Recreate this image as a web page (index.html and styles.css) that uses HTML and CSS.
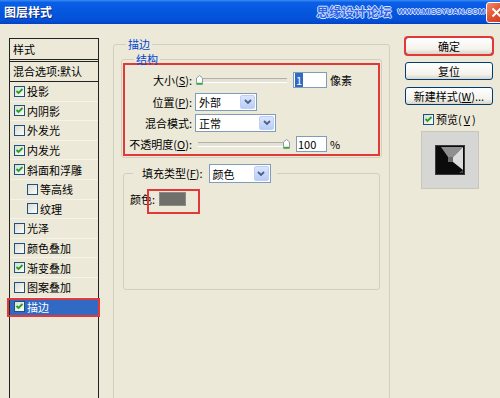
FILE: index.html
```html
<!DOCTYPE html>
<html lang="zh-CN">
<head>
<meta charset="utf-8">
<title>图层样式</title>
<link rel="stylesheet" href="styles.css">
</head>
<body>
<div class="titlebar">
  <span class="title">图层样式</span>
  <span class="wm"><span class="wm-cn">思缘设计论坛</span><span class="wm-en">WWW.MISSYUAN.COM</span></span>
  <span class="close"><svg width="11" height="11" viewBox="0 0 11 11"><path d="M1.5 1.5 L9.5 9.5 M9.5 1.5 L1.5 9.5" stroke="#fff" stroke-width="2"/></svg></span>
</div>
<div class="main">
  <div class="list">
    <div class="list-head">样式</div>
    <div class="list-blend">混合选项:默认</div>
    <div class="item"><span class="cb"><svg viewBox="0 0 9 9" width="9" height="9"><path d="M1.5 4 L3.5 6 L7.5 2" fill="none" stroke="#21a121" stroke-width="1.8"/></svg></span>投影</div>
    <div class="item"><span class="cb"><svg viewBox="0 0 9 9" width="9" height="9"><path d="M1.5 4 L3.5 6 L7.5 2" fill="none" stroke="#21a121" stroke-width="1.8"/></svg></span>内阴影</div>
    <div class="item"><span class="cb"></span>外发光</div>
    <div class="item"><span class="cb"><svg viewBox="0 0 9 9" width="9" height="9"><path d="M1.5 4 L3.5 6 L7.5 2" fill="none" stroke="#21a121" stroke-width="1.8"/></svg></span>内发光</div>
    <div class="item"><span class="cb"><svg viewBox="0 0 9 9" width="9" height="9"><path d="M1.5 4 L3.5 6 L7.5 2" fill="none" stroke="#21a121" stroke-width="1.8"/></svg></span>斜面和浮雕</div>
    <div class="item sub"><span class="cb"></span>等高线</div>
    <div class="item sub"><span class="cb"></span>纹理</div>
    <div class="item"><span class="cb"></span>光泽</div>
    <div class="item"><span class="cb"></span>颜色叠加</div>
    <div class="item"><span class="cb"><svg viewBox="0 0 9 9" width="9" height="9"><path d="M1.5 4 L3.5 6 L7.5 2" fill="none" stroke="#21a121" stroke-width="1.8"/></svg></span>渐变叠加</div>
    <div class="item"><span class="cb"></span>图案叠加</div>
    <div class="item sel"><span class="cb"><svg viewBox="0 0 9 9" width="9" height="9"><path d="M1.5 4 L3.5 6 L7.5 2" fill="none" stroke="#21a121" stroke-width="1.8"/></svg></span>描边</div>
  </div>

  <fieldset class="group outer">
    <legend class="lg-outer">描边</legend>
    <fieldset class="group struct">
      <legend class="lg-struct">结构</legend>
      <div class="mark">
        <div class="row r1">
          <span class="lbl">大小(<u>S</u>):</span>
          <span class="slider s-size"><span class="thumb"><svg width="7" height="10" viewBox="0 0 7 10"><path d="M0.5 3 L3.5 0.5 L6.5 3 V9.5 H0.5 Z" fill="#fff" stroke="#8c9ca8"/><path d="M1 8.5 H6" stroke="#2bb52b" stroke-width="1.5"/></svg></span></span>
          <span class="input w34"><span class="hl">1</span></span>
          <span class="unit">像素</span>
        </div>
        <div class="row r2">
          <span class="lbl">位置(<u>P</u>):</span>
          <span class="select w62">外部<span class="arrow"><svg width="8" height="6" viewBox="0 0 8 6"><path d="M1 1 L4 4 L7 1" fill="none" stroke="#4d6185" stroke-width="1.8"/></svg></span></span>
        </div>
        <div class="row r3">
          <span class="lbl">混合模式:</span>
          <span class="select w81">正常<span class="arrow"><svg width="8" height="6" viewBox="0 0 8 6"><path d="M1 1 L4 4 L7 1" fill="none" stroke="#4d6185" stroke-width="1.8"/></svg></span></span>
        </div>
        <div class="row r4">
          <span class="lbl">不透明度(<u>O</u>):</span>
          <span class="slider s-op"><span class="thumb right"><svg width="7" height="10" viewBox="0 0 7 10"><path d="M0.5 3 L3.5 0.5 L6.5 3 V9.5 H0.5 Z" fill="#fff" stroke="#8c9ca8"/><path d="M1 8.5 H6" stroke="#2bb52b" stroke-width="1.5"/></svg></span></span>
          <span class="input w31">100</span>
          <span class="unit">%</span>
        </div>
      </div>
    </fieldset>
    <fieldset class="group fill">
      <legend class="lg-fill"><span>填充类型(<u>F</u>):</span><span class="select w62 tall">颜色<span class="arrow"><svg width="8" height="6" viewBox="0 0 8 6"><path d="M1 1 L4 4 L7 1" fill="none" stroke="#4d6185" stroke-width="1.8"/></svg></span></span></legend>
      <div class="color-row">颜色:<span class="swatch"></span><span class="mark2"></span></div>
    </fieldset>
  </fieldset>

  <div class="side">
    <div class="btn ok">确定</div>
    <div class="btn">复位</div>
    <div class="btn">新建样式(<u>W</u>)...</div>
    <div class="preview-row"><span class="cb"><svg viewBox="0 0 9 9" width="9" height="9"><path d="M1.5 4 L3.5 6 L7.5 2" fill="none" stroke="#21a121" stroke-width="1.8"/></svg></span>预览(<u>V</u>)</div>
    <div class="preview">
      <svg width="30" height="30" viewBox="0 0 30 30">
        <rect width="30" height="30" fill="#3a3a3a"/>
        <rect x="1" y="1" width="28" height="28" fill="#0b0b0b"/>
        <polygon points="6,2 28,2 18,12 13,12" fill="#8f8f8f"/>
        <polygon points="28,2 28,25 18,17 18,12" fill="#dcdcdc"/>
        <rect x="13" y="12" width="5" height="5" fill="#6b6b6b"/>
        <polygon points="28,25 28,28 24,28" fill="#4a4a4a"/>
      </svg>
    </div>
  </div>
</div>
</body>
</html>
```

FILE: styles.css
```css
* { box-sizing: border-box; }
html, body { margin: 0; padding: 0; }
body {
  width: 500px;
  height: 398px;
  overflow: hidden;
  background: #ece9d8;
  font-family: "Noto Sans CJK SC", "Liberation Sans", sans-serif;
  font-size: 11px;
  color: #000;
}
u { text-decoration: underline; text-underline-offset: 1px; }

/* title bar */
.titlebar {
  height: 24px;
  display: flex;
  align-items: center;
  background: linear-gradient(#3b8cf5 0%, #0b5fe6 10%, #0556de 50%, #0451d6 85%, #0341c4 100%);
  overflow: hidden;
}
.title {
  margin-left: 4px;
  color: #fff;
  font-weight: bold;
  font-size: 12px;
  line-height: 14px;
  text-shadow: 1px 1px #0a2c85;
}
.wm {
  margin-left: auto;
  display: flex;
  align-items: center;
  gap: 6px;
}
.wm-cn {
  font-size: 12.5px;
  font-weight: bold;
  line-height: 14px;
  color: #2d63ea;
  text-shadow: -1px 0 #d8e6ff, 1px 0 #d8e6ff, 0 -1px #d8e6ff, 0 1px #d8e6ff;
}
.wm-en {
  font-family: "Liberation Sans", sans-serif;
  font-size: 8px;
  font-weight: bold;
  line-height: 10px;
  color: #2d63ea;
  text-shadow: -1px 0 #d8e6ff, 1px 0 #d8e6ff, 0 -1px #d8e6ff, 0 1px #d8e6ff;
}
.close {
  width: 21px;
  height: 21px;
  margin-left: 1px;
  margin-right: -7px;
  flex-shrink: 0;
  border: 1px solid #fff;
  border-radius: 3px;
  background: linear-gradient(135deg, #f08a6a, #e0502c 50%, #c93a18);
  display: flex;
  align-items: center;
  justify-content: center;
}

/* main */
.main {
  display: flex;
  align-items: flex-start;
  padding-top: 13px;
  height: 374px;
}

/* left list */
.list {
  margin: 1px 0 0 9px;
  width: 90px;
  height: 400px;
  flex-shrink: 0;
  border: 1px solid #222;
  line-height: 14px;
}
.list-head {
  height: 23px;
  padding: 3px 0 0 3px;
  border-bottom: 3px double #222;
}
.list-blend {
  height: 20px;
  padding: 2px 0 0 3px;
  border-bottom: 1px solid #222;
}
.item {
  height: 19.6px;
  display: flex;
  align-items: center;
  gap: 2px;
  padding-left: 4px;
  border-bottom: 1px solid #f5f3ea;
}
.item.sub { padding-left: 17px; }
.item.sel {
  position: relative;
  background: #316ac5;
  color: #fff;
  border-bottom-color: #316ac5;
}
.item.sel::after {
  content: "";
  position: absolute;
  left: -3px;
  right: -2px;
  top: 0;
  bottom: -1px;
  border: 2px solid #e23838;
}

.cb {
  width: 11px;
  height: 11px;
  flex-shrink: 0;
  border: 1px solid #1c5180;
  background: linear-gradient(135deg, #dcdcd5, #fbfbf9);
  display: flex;
  align-items: center;
  justify-content: center;
}

/* middle group */
.group {
  margin: 0;
  padding: 0;
  border: 1px solid #d0d0bf;
  border-radius: 3px;
  min-inline-size: 0;
}
.group > legend {
  padding: 0 2px;
  line-height: 14px;
  color: #0046d5;
}
.outer {
  margin-left: 14px;
  width: 277px;
  height: 400px;
  flex-shrink: 0;
}
.lg-outer { margin-left: 12px; }
.struct {
  margin: 2px 0 0 7px;
  width: 261px;
  padding: 0 0 1px 1px;
}
.lg-struct { margin-left: 11px; line-height: 12px !important; }
.mark {
  margin: -2px 1px 0 0;
  border: 2px solid #e23838;
  padding: 7px 0 2px 0;
  display: flex;
  flex-direction: column;
}
.row {
  display: flex;
  align-items: center;
  line-height: 14px;
}
.r1 { height: 16px; }
.r2 { height: 18px; margin-top: 5px; }
.r3 { height: 18px; margin-top: 3px; }
.r4 { height: 16px; margin-top: 4px; }
.lbl {
  width: 67px;
  text-align: right;
  margin-right: 3px;
  white-space: nowrap;
}
.slider {
  position: relative;
  height: 12px;
  display: flex;
  align-items: center;
}
.slider::before {
  content: "";
  display: block;
  width: 100%;
  height: 3px;
  border-top: 1px solid #b4b1a4;
  border-bottom: 1px solid #fff;
  background: #e4e2d6;
}
.s-size { width: 91px; margin-left: 1px; }
.s-op { width: 92px; margin-left: 3px; }
.thumb {
  position: absolute;
  left: 0;
  top: 1px;
  width: 7px;
  height: 10px;
  display: flex;
}
.thumb.right { left: auto; right: 0; }
.input {
  height: 16px;
  border: 1px solid #7f9db9;
  background: #fff;
  margin-left: 6px;
  padding-left: 1px;
  line-height: 14px;
  display: flex;
  align-items: center;
}
.w34 { width: 34px; }
.w31 { width: 31px; }
.hl { background: #316ac5; color: #fff; padding: 0 1px; }
.unit { margin-left: 3px; }

.select {
  height: 18px;
  display: flex;
  align-items: center;
  border: 1px solid #7f9db9;
  background: #fff;
  padding-left: 3px;
  line-height: 14px;
  color: #000;
}
.select.tall { height: 19px; }
.w62 { width: 62px; }
.w81 { width: 81px; }
.arrow {
  margin-left: auto;
  margin-right: 1px;
  width: 15px;
  height: calc(100% - 2px);
  border: 1px solid #c0d0f5;
  border-radius: 2px;
  background: linear-gradient(#dbe5fe, #b9cdf8);
  display: flex;
  align-items: center;
  justify-content: center;
}

.fill {
  margin: 6px 0 0 9px;
  width: 257px;
  height: 126px;
}
.lg-fill {
  margin-left: 9px;
  padding: 0 6px 0 9px !important;
  display: flex;
  align-items: center;
  gap: 6px;
  color: #000 !important;
  line-height: 19px !important;
}
.color-row {
  position: relative;
  margin-top: 9px;
  height: 14px;
  padding-left: 6px;
  display: flex;
  align-items: center;
  line-height: 14px;
}
.swatch {
  width: 27px;
  height: 14px;
  margin-left: 4px;
  background: #6f706c;
  border: 1px solid #8a8a86;
}
.mark2 {
  position: absolute;
  left: 23px;
  top: -3px;
  width: 53px;
  height: 25px;
  border: 2px solid #e23838;
}

/* right side */
.side {
  margin-left: 15px;
  width: 88px;
  flex-shrink: 0;
  display: flex;
  flex-direction: column;
}
.btn {
  height: 18px;
  margin-bottom: 7px;
  border: 1px solid #003c74;
  border-radius: 3px;
  background: linear-gradient(#ffffff, #f3f2ec 70%, #d9d5c8);
  text-align: center;
  line-height: 16px;
  white-space: nowrap;
}
.btn.ok { outline: 2px solid #e23838; outline-offset: -1px; }
.preview-row {
  margin-top: 1px;
  padding-left: 18px;
  height: 12px;
  display: flex;
  align-items: center;
  gap: 2px;
  line-height: 14px;
}
.preview {
  margin: 6px 0 0 16px;
  width: 58px;
  height: 58px;
  background: #d6d6d4;
  border: 1px solid #c9c7bd;
  display: flex;
  align-items: center;
  justify-content: center;
}
```
